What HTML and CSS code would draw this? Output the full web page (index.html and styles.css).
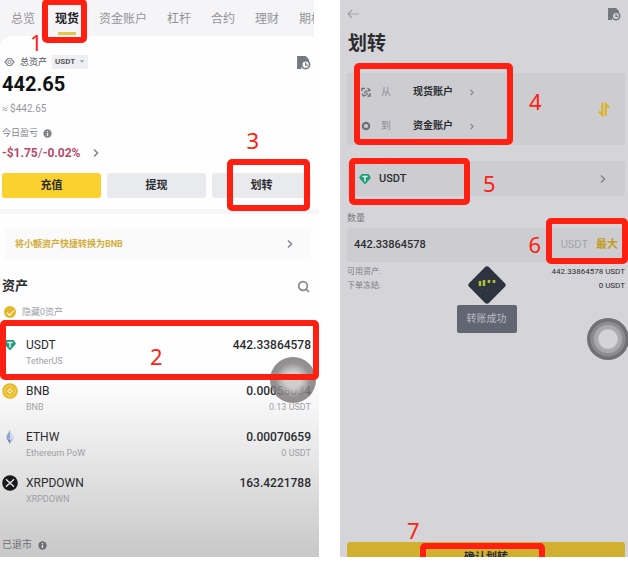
FILE: index.html
```html
<!DOCTYPE html>
<html lang="zh-CN">
<head>
    <meta charset="UTF-8">
    <meta name="viewport" content="width=device-width, initial-scale=1.0">
    <title>现货划转</title>
    <link rel="stylesheet" href="styles.css">
</head>
<body>
    <svg class="defs" width="0" height="0" aria-hidden="true">
        <symbol id="chevron" viewBox="0 0 8 12"><path d="M2 2.500l3.500 3.500L2 9.500" fill="none" stroke="currentColor" stroke-width="1.600"/></symbol>
        <symbol id="info" viewBox="0 0 10 10"><circle cx="5" cy="5" r="4.600" fill="currentColor"/><path d="M5 4.500v3.200M5 2.200v1.300" stroke="#e8e8ea" stroke-width="1.400"/></symbol>
        <symbol id="history" viewBox="0 0 14 14"><path d="M1 1h8l3 3v1.500H8.500L5 7.500V13H1z" fill="currentColor"/><circle cx="9" cy="9" r="3.700" fill="none" stroke="currentColor" stroke-width="1.600"/><path d="M9 7v2.400h2" fill="none" stroke="currentColor" stroke-width="1.200"/></symbol>
        <symbol id="tether" viewBox="0 0 12 12"><path d="M2.500 1h7L12 4.800 6 11.400 0 4.800z" fill="#1f9c7c"/><path d="M3.300 3.500h5.400M6 3.500v5" stroke="#e4f3ef" stroke-width="1.500"/></symbol>
    </svg>

    <main class="guide">
        <section class="screen wallet">
            <nav class="tabs">
                <a href="#">总览</a>
                <a href="#" class="active">现货</a>
                <a href="#">资金账户</a>
                <a href="#">杠杆</a>
                <a href="#">合约</a>
                <a href="#">理财</a>
                <a href="#">期权</a>
            </nav>

            <div class="balance">
                <div class="balance-head">
                    <svg width="11" height="10" viewBox="0 0 11 10"><path d="M1 5l3-3.500h3L10 5 7 8.500H4z" fill="none" stroke="#85878e" stroke-width="1.200"/><circle cx="5.500" cy="5" r="1.600" fill="none" stroke="#85878e"/></svg>
                    <span>总资产</span>
                    <button class="currency">USDT <i class="caret"></i></button>
                    <svg class="push history" width="15" height="15"><use href="#history"/></svg>
                </div>
                <div class="total">442.65</div>
                <div class="approx">≈ $442.65</div>
                <div class="pnl-label">今日盈亏 <svg width="9" height="9"><use href="#info"/></svg></div>
                <div class="pnl"><span><b>-$1.75</b>/<b>-0.02%</b></span><svg class="chevron" width="8" height="12"><use href="#chevron"/></svg></div>
                <div class="actions">
                    <button class="primary">充值</button>
                    <button>提现</button>
                    <button>划转</button>
                </div>
            </div>

            <a href="#" class="promo">将小额资产快捷转换为BNB<svg class="chevron" width="8" height="12"><use href="#chevron"/></svg></a>

            <div class="assets-head">
                <h2>资产</h2>
                <svg width="13" height="13" viewBox="0 0 13 13"><circle cx="6" cy="6" r="4.300" fill="none" stroke="#85878e" stroke-width="1.700"/><path d="M9 9l3 3" stroke="#85878e" stroke-width="1.700"/></svg>
            </div>
            <label class="hide-zero"><input type="checkbox" checked>隐藏0资产</label>

            <ul class="assets">
                <li>
                    <svg class="coin" width="16" height="16" viewBox="-2 -2 16 16"><use href="#tether" width="12" height="12"/></svg>
                    <div class="name">USDT<small>TetherUS</small></div>
                    <div class="amount">442.33864578</div>
                </li>
                <li>
                    <svg class="coin" width="16" height="16" viewBox="0 0 16 16"><circle cx="8" cy="8" r="7.800" fill="#e8b923"/><circle cx="8" cy="8" r="5.200" fill="none" stroke="#f6dc83"/><path d="M8 4.800L11.200 8 8 11.200 4.800 8z" fill="#f8e6a4"/><circle cx="8" cy="8" r="1" fill="#e8b923"/></svg>
                    <div class="name">BNB<small>BNB</small></div>
                    <div class="amount">0.00058034<small>0.13 USDT</small></div>
                </li>
                <li>
                    <svg class="coin" width="16" height="16" viewBox="0 0 16 16"><path d="M8 1L4 8l4 2.500z" fill="#8fa2d2"/><path d="M8 1l4 7-4 2.500z" fill="#d3dbee"/><path d="M4 8.500L8 15v-4z" fill="#6d82b9"/><path d="M12 8.500L8 15v-4z" fill="#a9b7dc"/></svg>
                    <div class="name">ETHW<small>Ethereum PoW</small></div>
                    <div class="amount">0.00070659<small>0 USDT</small></div>
                </li>
                <li>
                    <svg class="coin" width="16" height="16" viewBox="0 0 16 16"><circle cx="8" cy="8" r="7.800" fill="#18191b"/><path d="M4 4.200l2.500 2.500q1.500 1.300 3 0L12 4.200M4 11.800l2.500-2.500q1.500-1.300 3 0l2.500 2.500" fill="none" stroke="#e6e6e6" stroke-width="1.400"/></svg>
                    <div class="name">XRPDOWN<small>XRPDOWN</small></div>
                    <div class="amount">163.4221788</div>
                </li>
            </ul>
            <div class="delisted">已退市 <svg width="9" height="9"><use href="#info"/></svg></div>

            <div class="assist assist-wallet"></div>
            <div class="mark mark-1"></div><span class="step step-1">1</span>
            <div class="mark mark-2"></div><span class="step step-2">2</span>
            <div class="mark mark-3"></div><span class="step step-3">3</span>
        </section>

        <section class="screen transfer">
            <header class="topbar">
                <svg width="13" height="10" viewBox="0 0 13 10"><path d="M12 5H1M5 1L1 5l4 4" fill="none" stroke="#a4a5ab" stroke-width="1.200"/></svg>
                <svg class="history" width="14" height="14"><use href="#history"/></svg>
            </header>
            <h1>划转</h1>

            <div class="route">
                <div class="route-rows">
                    <div class="route-row">
                        <svg width="10" height="10" viewBox="0 0 10 10"><path d="M1 4V1.500h3M6.500 1l2.500 2-2.500 1.500M9 6v3H6.500M1 6.500L2.500 9 5 8M3 6l3-2.500M5 6l2 1.500" fill="none" stroke="#6f7077" stroke-width="1.400"/></svg>
                        <span class="dir">从</span><b>现货账户</b>
                        <svg class="chevron" width="6" height="9"><use href="#chevron"/></svg>
                    </div>
                    <div class="route-row">
                        <svg width="10" height="10" viewBox="0 0 10 10"><circle cx="5" cy="5" r="3.200" fill="none" stroke="#6f7077" stroke-width="2.200"/></svg>
                        <span class="dir">到</span><b>资金账户</b>
                        <svg class="chevron" width="6" height="9"><use href="#chevron"/></svg>
                    </div>
                </div>
                <svg width="12" height="15" viewBox="0 0 12 15"><path d="M4.300 1v12L1 9.500M7.700 14V2L11 5.500" fill="none" stroke="#dcb324" stroke-width="2.100"/></svg>
            </div>

            <button class="coin-select">
                <svg width="12" height="12"><use href="#tether"/></svg>
                USDT
                <svg class="chevron push" width="8" height="12"><use href="#chevron"/></svg>
            </button>

            <label class="field-label" for="amount">数量</label>
            <div class="field">
                <input id="amount" type="text" value="442.33864578">
                <span>USDT</span>
                <button>最大</button>
            </div>

            <dl class="limits">
                <div><dt>可用资产:</dt><dd>442.33864578 USDT</dd></div>
                <div><dt>下单冻结:</dt><dd>0 USDT</dd></div>
            </dl>

            <div class="confirm"><button>确认划转</button></div>

            <div class="toast">
                <svg width="40" height="40" viewBox="0 0 40 40"><rect x="6" y="6" width="28" height="28" rx="3" transform="rotate(45 20 20)" fill="#2d3440"/><path d="M13 16v5M17 15v6M22 15v3M27 15v3" stroke="#b5c22d" stroke-width="2.500"/><path d="M14 24h2M19 25h2" stroke="#414959"/></svg>
                <div class="toast-text">转账成功</div>
            </div>
            <div class="assist assist-transfer"></div>
            <div class="mark mark-4"></div><span class="step step-4">4</span>
            <div class="mark mark-5"></div><span class="step step-5">5</span>
            <div class="mark mark-6"></div><span class="step step-6">6</span>
            <div class="mark mark-7"></div><span class="step step-7">7</span>
        </section>
    </main>
</body>
</html>
```
FILE: styles.css
```css
* {
    box-sizing: border-box;
}

body {
    margin: 0;
    background: #fff;
    color: #2b2c30;
    font-family: Roboto, "Noto Sans CJK SC", sans-serif;
    font-size: 12px;
    line-height: 16px;
    overflow: hidden;
}

h1, h2, ul, dl, dd {
    margin: 0;
    padding: 0;
}

a {
    color: inherit;
    text-decoration: none;
}

button, input {
    border: 0;
    padding: 0;
    background: none;
    font: inherit;
    color: inherit;
}

svg {
    display: block;
    flex: none;
}

.defs {
    position: absolute;
}

.guide {
    display: grid;
    grid-template-columns: 319fr 288fr;
    gap: 21px;
}

.screen {
    position: relative;
    min-width: 0;
}

.push {
    margin-left: auto;
}

.chevron {
    color: #85878e;
}

.history {
    color: #76787f;
}

/* wallet */
.wallet {
    background: linear-gradient(#fefefe 0, #fefefe 380px, #e3e3e4 470px, #c8c8c9 100%);
}

.tabs {
    display: flex;
    gap: 20px;
    height: 44px;
    padding: 11px 0 0 11px;
    margin-right: 5px;
    overflow: hidden;
    white-space: nowrap;
    color: #929399;
    background: #f5f5f7;
}

.tabs .active {
    height: 24px;
    color: #1e2024;
    font-weight: bold;
    background: linear-gradient(#eac34a, #eac34a) center bottom / 18px 3px no-repeat;
}

.balance {
    position: relative;
    margin-top: -8px;
    padding: 17px 8px 11px 2px;
    border-radius: 12px 12px 0 0;
    border-bottom: 5px solid #f6f6f8;
    background: #fefefe;
}

.balance-head {
    display: flex;
    align-items: center;
    gap: 5px;
    height: 18px;
    padding-left: 2px;
    font-size: 9px;
    color: #55575d;
}

.currency {
    height: 14px;
    padding: 0 4px 0 3px;
    font-size: 8px;
    font-weight: bold;
    line-height: 14px;
    background: #eeeff2;
}

.caret {
    display: inline-block;
    margin-left: 3px;
    border: 2px solid transparent;
    border-top: 3px solid #a5a6ac;
    border-bottom: 0;
    vertical-align: middle;
}

.total {
    font-size: 20px;
    font-weight: bold;
    line-height: 26px;
    color: #111214;
}

.approx {
    margin-top: 4px;
    font-size: 10px;
    color: #96979c;
}

.pnl-label {
    display: flex;
    align-items: center;
    gap: 5px;
    margin-top: 8px;
    font-size: 9px;
    color: #818389;
}

.pnl {
    display: flex;
    align-items: center;
    gap: 12px;
    margin-top: 4px;
    font-size: 12px;
    color: #b64b6b;
}

.pnl b {
    font-weight: bold;
}

.actions {
    display: grid;
    grid-template-columns: repeat(3, 1fr);
    gap: 6px;
    margin-top: 12px;
}

.actions button {
    height: 25px;
    border-radius: 3px;
    font-size: 11px;
    font-weight: bold;
    background: #e9eaed;
}

.actions .primary {
    background: #fbd12f;
}

.promo {
    display: flex;
    align-items: center;
    justify-content: space-between;
    height: 30px;
    margin: 15px 8px 12px 5px;
    padding: 0 17px 0 10px;
    font-size: 9px;
    font-weight: bold;
    color: #d4ac3a;
    background: #fafafb;
}

.assets-head {
    display: flex;
    align-items: center;
    justify-content: space-between;
    height: 30px;
    padding: 0 9px 0 2px;
}

.assets-head h2 {
    font-size: 13px;
}

.hide-zero {
    display: flex;
    align-items: center;
    gap: 6px;
    height: 22px;
    padding-left: 4px;
    font-size: 9px;
    color: #a0a1a6;
}

.hide-zero input {
    appearance: none;
    width: 12px;
    height: 12px;
    margin: 0;
    border-radius: 50%;
    background: #e5b729;
}

.hide-zero input:checked::after {
    content: "";
    display: block;
    width: 6px;
    height: 3px;
    margin: 4px 0 0 3px;
    border: solid #fff;
    border-width: 0 0 1px 1px;
    transform: rotate(-45deg);
}

.assets {
    list-style: none;
    padding-top: 14px;
}

.assets li {
    display: flex;
    gap: 8px;
    min-height: 46px;
    padding: 0 8px 0 2px;
}

.assets small {
    display: block;
    font-size: 9px;
    font-weight: normal;
    color: #a0a0a4;
}

.amount {
    margin-left: auto;
    text-align: right;
    font-weight: 500;
}

.delisted {
    display: flex;
    align-items: center;
    gap: 6px;
    padding: 16px 0 4px 2px;
    font-size: 10px;
    color: #6e6f74;
}

/* transfer */
.transfer {
    display: flex;
    flex-direction: column;
    padding: 0 3px 0 7px;
    background: #d5d5d9;
}

.topbar {
    display: flex;
    align-items: center;
    justify-content: space-between;
    height: 28px;
    padding-right: 4px;
}

.transfer h1 {
    padding-left: 1px;
    font-size: 19px;
    line-height: 32px;
}

.route {
    display: flex;
    align-items: center;
    justify-content: space-between;
    margin-top: 13px;
    padding: 2px 15px 2px 14px;
    border-radius: 3px;
    background: #cdcdd1;
}

.route-row {
    display: flex;
    align-items: center;
    height: 34px;
    font-size: 10px;
}

.route-row .dir {
    width: 32px;
    margin-left: 10px;
    color: #8b8c92;
}

.route-row .chevron {
    margin-left: 16px;
}

.coin-select {
    display: flex;
    align-items: center;
    gap: 8px;
    height: 35px;
    margin-top: 16px;
    padding: 0 18px 0 12px;
    border-radius: 3px;
    font-size: 11px;
    font-weight: 500;
    background: #cdcdd1;
}

.field-label {
    margin-top: 14px;
    font-size: 9px;
    color: #7b7c82;
}

.field {
    display: flex;
    align-items: center;
    height: 34px;
    margin-top: 2px;
    padding: 0 7px;
    border-radius: 3px;
    font-size: 11px;
    background: #cdcdd1;
}

.field input {
    flex: 1;
    min-width: 0;
    font-weight: 500;
}

.field span {
    color: #a3a4aa;
}

.field button {
    margin-left: 8px;
    font-weight: bold;
    color: #c59c22;
}

.limits {
    margin-top: 2px;
    font-size: 8px;
}

.limits div {
    display: flex;
    justify-content: space-between;
    height: 14px;
}

.limits dt {
    color: #7b7c82;
}

/* only the top of the button shows above the fold */
.confirm {
    height: 15px;
    margin-top: auto;
    overflow: hidden;
}

.confirm button {
    display: block;
    width: 100%;
    height: 32px;
    border-radius: 3px;
    font-size: 11px;
    font-weight: bold;
    background: #d1b02f;
}

.toast {
    position: absolute;
    top: 265px;
    left: 0;
    right: 0;
    display: flex;
    flex-direction: column;
    align-items: center;
    padding-left: 5px;
}

.toast-text {
    padding: 6px 10px;
    border-radius: 2px;
    font-size: 10px;
    color: #b9bcc4;
    background: #626672;
}

.assist {
    position: absolute;
    border-radius: 50%;
}

.assist-wallet {
    top: 357px;
    right: 3px;
    width: 46px;
    height: 46px;
    background: radial-gradient(circle closest-side, #d0cdcd 0 35%, #aaa6a7dd 55%, #858182dd 75%, #757173cc 100%);
}

.assist-transfer {
    top: 318px;
    right: -1px;
    width: 42px;
    height: 42px;
    background: radial-gradient(circle closest-side, #d4d3d6 0 43%, #aaa9ad 50% 64%, #8c8b8f 70% 80%, #717075 86%);
}

/* numbered steps over the screens */
.mark {
    position: absolute;
    border: 6px solid #ff2012;
    border-radius: 5px;
}

.step {
    position: absolute;
    font-family: "Noto Sans", sans-serif;
    font-size: 22px;
    line-height: 24px;
    color: #ff2012;
}

.mark-1 {
    top: -1px;
    left: 42px;
    width: 45px;
    height: 44px;
}

.step-1 {
    top: 30px;
    left: 30px;
}

.mark-2 {
    top: 320px;
    left: 0;
    right: 0;
    height: 60px;
}

.step-2 {
    top: 344px;
    left: 150px;
}

.mark-3 {
    top: 159px;
    right: 9px;
    width: 83px;
    height: 52px;
}

.step-3 {
    top: 128px;
    right: 60px;
}

.mark-4 {
    top: 63px;
    left: 14px;
    width: 159px;
    height: 82px;
}

.step-4 {
    top: 89px;
    left: 189px;
}

.mark-5 {
    top: 158px;
    left: 9px;
    width: 121px;
    height: 47px;
}

.step-5 {
    top: 171px;
    left: 143px;
}

.mark-6 {
    top: 218px;
    right: 0;
    width: 82px;
    height: 46px;
}

.step-6 {
    top: 232px;
    right: 87px;
}

.mark-7 {
    top: 543px;
    left: 80px;
    width: 125px;
    height: 20px;
}

.step-7 {
    top: 518px;
    left: 67px;
}
```
